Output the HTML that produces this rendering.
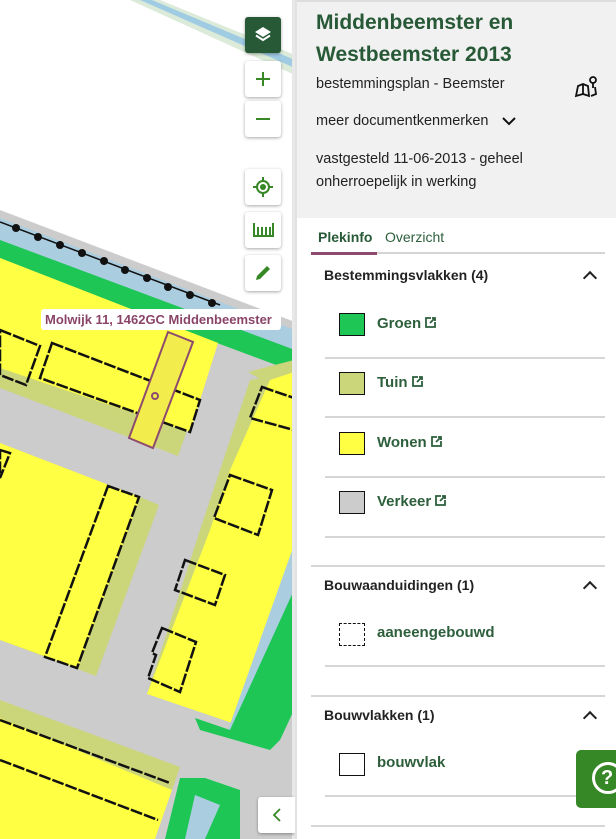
<!DOCTYPE html>
<html><head><meta charset="utf-8"><style>
*{margin:0;padding:0;box-sizing:border-box}
body{width:616px;height:839px;overflow:hidden;font-family:"Liberation Sans",sans-serif;position:relative;background:#fff}
.map{position:absolute;left:0;top:0;width:295px;height:839px;overflow:hidden}
.btn{position:absolute;left:245px;width:36px;height:36px;background:#fff;border-radius:3px;box-shadow:0 1px 3px rgba(0,0,0,.35);display:flex;align-items:center;justify-content:center}
.side{position:absolute;left:295px;top:0;width:321px;height:839px;border-left:2px solid #e2e2e2;background:#fff}
.hdr{background:#f1f1f1;height:218px;padding:5px 0 0 19px;border-top:2px solid #ddd}
h1{font-size:21px;line-height:32px;color:#275937;font-weight:bold}
.t{font-size:14.5px;color:#222;position:absolute;left:19px}
.tabs{position:absolute;left:14px;top:228px;width:294px;height:26px;border-bottom:2px solid #d5d5d5;font-size:14px}
.sec{position:absolute;left:27px;font-size:14px;font-weight:bold;color:#222}
.up{position:absolute;left:288px;width:10px;height:10px;border-left:2px solid #222;border-top:2px solid #222;transform:rotate(45deg)}
.sw{position:absolute;left:42px;width:26px;height:23px;border:1.5px solid #111}
.it{position:absolute;left:80px;font-size:15px;font-weight:bold;color:#2d5f3c}
.it svg{vertical-align:-1px;margin-left:3px}
.sep{position:absolute;left:28px;width:280px;height:2px;background:#d6d6d6}
.fsep{position:absolute;left:14px;width:294px;height:2px;background:#d6d6d6}
</style></head><body>
<div class="map">
<svg width="295" height="839" viewBox="0 0 295 839">
<rect width="295" height="839" fill="#fff"/>
<polygon points="130,0 160,0 295,55 295,75" fill="#dcebd9"/>
<polygon points="140,0 152,0 295,60 295,68" fill="#9fcbe3"/>
<polygon points="0,210 295,322 295,839 0,839" fill="#cccccc"/>
<polygon points="0,218 220,302 295,330 295,360 0,248" fill="#aacde0"/>
<polygon points="0,240 295,350 295,372 0,262" fill="#1ec655"/>
<polygon points="0,258 218,343 178,456 0,388" fill="#cbd57a"/>
<polygon points="0,258 218,343 190,432 0,368" fill="#ffff44"/>
<polygon points="0,443 140,497 159,505 96,676 0,640" fill="#cbd57a"/>
<polygon points="0,443 140,497 78,668 0,640" fill="#ffff44"/>
<polygon points="248,372 294,360 294,380 262,380" fill="#cbd57a"/>
<polygon points="250,380 294,372 294,545 238,725 147,694 200,530 220,470" fill="#cbd57a"/>
<polygon points="270,380 294,372 294,545 238,725 147,694 210,530 230,470" fill="#ffff44"/>
<polygon points="294,545 294,600 246,735 228,730" fill="#aacde0"/>
<polygon points="294,590 294,710 280,740 270,750 200,730 195,718 230,730" fill="#1ec655"/>
<polygon points="0,700 180,767 172,790 0,725" fill="#cbd57a"/>
<polygon points="0,718 172,790 155,839 0,839" fill="#ffff44"/>
<polygon points="180,778 205,778 240,790 240,839 165,839" fill="#1ec655"/>
<polygon points="195,795 220,805 205,839 185,839" fill="#aacde0"/>
<g stroke="#111" stroke-width="2.5" fill="none" stroke-dasharray="12,2">
<polygon points="0,330 40,346 26,385 0,375"/>
<polygon points="52,343 200,400 190,432 40,378"/>
<polygon points="108,486 139,497 77,668 45,657"/>
<polygon points="0,450 10,453 0,478"/>
<polygon points="262,387 294,398 294,430 250,418"/>
<polygon points="230,475 272,490 258,535 214,518"/>
<polygon points="185,560 225,575 215,605 175,590"/>
<polygon points="162,628 196,642 180,692 148,678 156,655 152,653"/>
<polyline points="0,720 170,783"/>
<polyline points="0,760 158,820"/>
</g>
<polyline points="0,222 220,305" stroke="#111" stroke-width="1.5"/>
<g fill="#111"><circle cx="16" cy="228" r="4"/><circle cx="38" cy="237" r="4"/><circle cx="60" cy="245" r="4"/><circle cx="82" cy="253" r="4"/><circle cx="104" cy="261" r="4"/><circle cx="125" cy="270" r="4"/><circle cx="147" cy="278" r="4"/><circle cx="168" cy="287" r="4"/><circle cx="190" cy="295" r="4"/><circle cx="212" cy="303" r="4"/></g>
<polygon points="168,332 193,342 153,448 129,438" fill="#f2ec4c" stroke="#8e4b6e" stroke-width="2"/>
<circle cx="155" cy="396" r="3" fill="none" stroke="#8e4b6e" stroke-width="2"/>
<rect x="292" y="0" width="3" height="839" fill="#e8e8e8"/>
</svg>
<div style="position:absolute;left:41px;top:309px;width:240px;height:21px;background:#fff;border-radius:3px;color:#8a4468;font-weight:bold;font-size:13px;line-height:21px;padding-left:4px">Molwijk 11, 1462GC Middenbeemster</div>
<div class="btn" style="top:17px;background:#275937"><svg width="20" height="20" viewBox="0 0 20 20"><path d="M10 2 L18 7 L10 12 L2 7Z" fill="#fff"/><path d="M3 10.5 L10 15 L17 10.5" stroke="#fff" stroke-width="2" fill="none"/></svg></div>
<div class="btn" style="top:61px"><svg width="16" height="16"><path d="M8 1V15M1 8H15" stroke="#368725" stroke-width="2"/></svg></div>
<div class="btn" style="top:101px"><svg width="16" height="16"><path d="M1 8H15" stroke="#368725" stroke-width="2"/></svg></div>
<div class="btn" style="top:169px"><svg width="22" height="22"><circle cx="11" cy="11" r="6" stroke="#368725" stroke-width="2" fill="none"/><circle cx="11" cy="11" r="3" fill="#368725"/><path d="M11 1V5M11 17V21M1 11H5M17 11H21" stroke="#368725" stroke-width="2"/></svg></div>
<div class="btn" style="top:212px"><svg width="22" height="16"><path d="M2 1V15M6 5V15M10 5V15M14 5V15M18 5V15M21 1V15M2 14H21" stroke="#368725" stroke-width="2"/></svg></div>
<div class="btn" style="top:255px"><svg width="20" height="20"><path d="M3 17 L4 13 L14 3 L17 6 L7 16Z" fill="#368725"/></svg></div>
<div class="btn" style="left:258px;top:797px;width:37px;border-radius:3px 0 0 3px"><svg width="12" height="14"><path d="M9 1L3 7L9 13" stroke="#368725" stroke-width="1.8" fill="none"/></svg></div>
</div>
<div class="side">
<div class="hdr"><h1>Middenbeemster en<br>Westbeemster 2013</h1></div>
<div class="t" style="top:76px">bestemmingsplan - Beemster</div>
<svg style="position:absolute;left:277px;top:74px" width="24" height="24" viewBox="0 0 24 24"><path d="M2 22 L4 12 L9 10 L14 12 L15 22 L9 20Z M9 10V20 M14 12 L15 22" stroke="#111" stroke-width="1.8" fill="none"/><circle cx="19" cy="6" r="3" stroke="#111" stroke-width="1.8" fill="none"/><path d="M19 9V14 M17 22 L22 20 L21 13" stroke="#111" stroke-width="1.8" fill="none"/></svg>
<div class="t" style="top:113px">meer documentkenmerken</div>
<svg style="position:absolute;left:205px;top:116px" width="14" height="10"><path d="M1 2L7 8L13 2" stroke="#111" stroke-width="2" fill="none"/></svg>
<div class="t" style="top:148px;line-height:23px">vastgesteld 11-06-2013 - geheel<br>onherroepelijk in werking</div>
<div class="tabs"><span style="position:absolute;left:7px;top:1px;font-weight:bold;color:#275937">Plekinfo</span><span style="position:absolute;left:74px;top:1px;color:#2d5f3c">Overzicht</span><div style="position:absolute;left:0;top:24px;width:66px;height:3px;background:#8e4b6e"></div></div>
<div class="sec" style="top:267px">Bestemmingsvlakken (4)</div><div class="up" style="top:273px"></div>
<div class="sw" style="top:313px;background:#1ec655"></div><div class="it" style="top:315px">Groen<svg width="13" height="13"><path d="M7 2H2V11H11V6M6 7L11 2M8 2H11V5" stroke="#2d5f3c" stroke-width="1.8" fill="none"/></svg></div>
<div class="sep" style="top:357px"></div>
<div class="sw" style="top:372px;background:#cbd57a"></div><div class="it" style="top:374px">Tuin<svg width="13" height="13"><path d="M7 2H2V11H11V6M6 7L11 2M8 2H11V5" stroke="#2d5f3c" stroke-width="1.8" fill="none"/></svg></div>
<div class="sep" style="top:416px"></div>
<div class="sw" style="top:432px;background:#ffff44"></div><div class="it" style="top:434px">Wonen<svg width="13" height="13"><path d="M7 2H2V11H11V6M6 7L11 2M8 2H11V5" stroke="#2d5f3c" stroke-width="1.8" fill="none"/></svg></div>
<div class="sep" style="top:476px"></div>
<div class="sw" style="top:491px;background:#cccccc"></div><div class="it" style="top:493px">Verkeer<svg width="13" height="13"><path d="M7 2H2V11H11V6M6 7L11 2M8 2H11V5" stroke="#2d5f3c" stroke-width="1.8" fill="none"/></svg></div>
<div class="sep" style="top:536px"></div>
<div class="fsep" style="top:565px"></div>
<div class="sec" style="top:577px">Bouwaanduidingen (1)</div><div class="up" style="top:583px"></div>
<div class="sw" style="top:623px;border:1.5px dashed #111"></div><div class="it" style="top:624px">aaneengebouwd</div>
<div class="sep" style="top:665px"></div>
<div class="fsep" style="top:695px"></div>
<div class="sec" style="top:707px">Bouwvlakken (1)</div><div class="up" style="top:713px"></div>
<div class="sw" style="top:753px"></div><div class="it" style="top:754px">bouwvlak</div>
<div class="sep" style="top:795px"></div>
<div class="fsep" style="top:825px"></div>
<div style="position:absolute;left:279px;top:750px;width:45px;height:58px;background:#368725;border-radius:5px 0 0 5px"><div style="position:absolute;left:16px;top:12px;width:32px;height:32px;border:3px solid #fff;border-radius:50%;color:#fff;font-weight:bold;font-size:20px;line-height:26px;padding-left:6px">?</div></div>
</div>
</body></html>
